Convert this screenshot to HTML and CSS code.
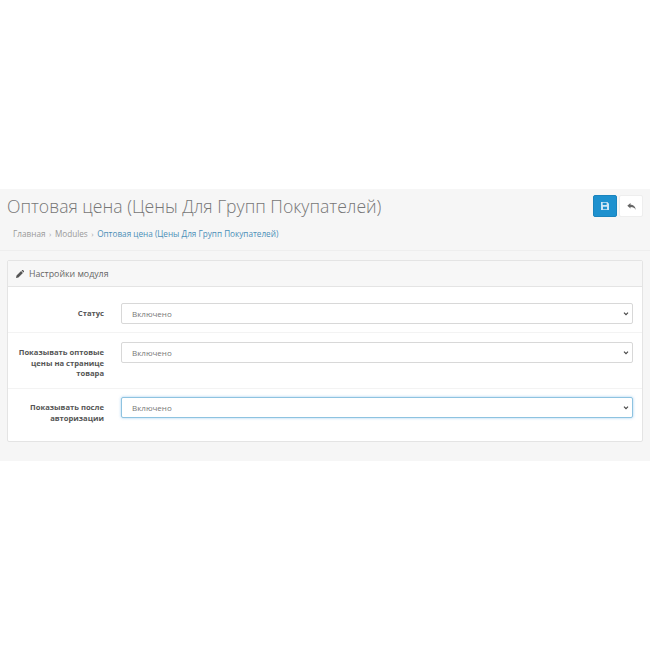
FILE: index.html
```html
<!DOCTYPE html>
<html lang="ru">
<head>
<meta charset="utf-8">
<title>Оптовая цена</title>
<link rel="stylesheet" href="styles.css">
</head>
<body>
<main class="band">
  <header class="page-header">
    <div class="title-row">
      <h1 class="title">Оптовая цена (Цены Для Групп Покупателей)</h1>
      <div class="actions">
        <button class="btn btn-primary" type="button" aria-label="Сохранить">
          <svg class="icon" viewBox="0 0 12 12" width="8" height="8"><path fill="#cfe6f5" fill-rule="evenodd" d="M0 0h9.5L12 2.5V12H0zM2.5 1v3.5h6V1zM3 7v4h6V7z"/></svg>
        </button>
        <button class="btn btn-default" type="button" aria-label="Отмена">
          <svg class="icon" viewBox="0 0 12 10" width="9" height="7"><path fill="#666" d="M0 4 4.6 0v2.4C8.6 2.4 11.6 4.4 12 10 10.6 7 8.6 5.8 4.6 5.8V8z"/></svg>
        </button>
      </div>
    </div>
    <nav class="crumbs">
      <span>Главная</span><span class="sep">›</span><span>Modules</span><span class="sep">›</span><span class="crumb-active">Оптовая цена (Цены Для Групп Покупателей)</span>
    </nav>
  </header>
  <section class="panel">
    <div class="panel-heading">
      <svg class="pencil" viewBox="0 0 12 12" width="8" height="8"><path fill="#555" d="M0 12l.8-3.6L7.6 1.6l2.8 2.8-6.8 6.8zM8.4.8 9.2 0a1 1 0 0 1 1.2 0L12 1.6a1 1 0 0 1 0 1.2l-.8.8z"/></svg>
      <span>Настройки модуля</span>
    </div>
    <form class="panel-body">
      <div class="row row-first">
        <label class="label">Статус</label>
        <div class="select">Включено<svg class="chev" viewBox="0 0 8 6" width="6" height="4"><path fill="none" stroke="#444" stroke-width="1.7" d="M1 1l3 3 3-3"/></svg></div>
      </div>
      <div class="row row-second">
        <label class="label">Показывать оптовые цены на странице товара</label>
        <div class="select">Включено<svg class="chev" viewBox="0 0 8 6" width="6" height="4"><path fill="none" stroke="#444" stroke-width="1.7" d="M1 1l3 3 3-3"/></svg></div>
      </div>
      <div class="row row-third">
        <label class="label">Показывать после авторизации</label>
        <div class="select select-focus">Включено<svg class="chev" viewBox="0 0 8 6" width="6" height="4"><path fill="none" stroke="#444" stroke-width="1.7" d="M1 1l3 3 3-3"/></svg></div>
      </div>
    </form>
  </section>
</main>
</body>
</html>
```
FILE: styles.css
```css
* { box-sizing: border-box; }
html, body { margin: 0; padding: 0; background: #fff; }
body {
  height: 650px;
  padding-top: 189px;
  font-family: "Open Sans", "Liberation Sans", sans-serif;
  color: #666;
}
.band {
  height: 272px;
  background: #f6f6f6;
  padding-bottom: 20px;
}
.page-header {
  height: 62px;
  padding: 6px 7px 0;
  border-bottom: 1px solid #eeeeee;
  margin-bottom: 9px;
}
.title-row { display: flex; justify-content: space-between; align-items: flex-start; }
.title {
  margin: 0;
  font-size: 17.6px;
  line-height: 22px;
  font-weight: 300;
  color: #777;
}
.actions { display: flex; gap: 2px; }
.btn {
  width: 24px;
  height: 22px;
  padding: 0;
  border: 1px solid transparent;
  border-radius: 2px;
  display: flex;
  align-items: center;
  justify-content: center;
}
.btn-primary { background: #1e91cf; border-color: #1b84bd; }
.btn-default { background: #fff; border-color: #eeeeee; }
.crumbs {
  display: flex;
  align-items: center;
  margin-top: 11px;
  padding-left: 6px;
  font-size: 8.2px;
  line-height: 12px;
  color: #999;
}
.sep { margin: 0 3.5px; font-size: 8px; color: #aaa; }
.crumb-active { color: #4b8fb8; }
.panel {
  height: 182px;
  margin: 0 7px;
  background: #fff;
  border: 1px solid #e4e4e4;
  border-radius: 2px;
}
.panel-heading {
  height: 26px;
  display: flex;
  align-items: center;
  gap: 5px;
  padding-left: 8px;
  background: #f7f7f7;
  border-bottom: 1px solid #e4e4e4;
  font-size: 8.8px;
  color: #666;
}
.panel-body { display: flex; flex-direction: column; }
.row {
  display: grid;
  grid-template-columns: 96px 1fr;
  column-gap: 17px;
  padding: 0 9px 0 0;
  border-bottom: 1px solid #f3f3f3;
}
.row-first { height: 46px; padding-top: 16px; }
.row-second { height: 56px; padding-top: 9px; }
.row-third { height: 54px; padding-top: 8px; border-bottom: 0; }
.label {
  padding-top: 5px;
  text-align: right;
  font-size: 7.65px;
  line-height: 10.6px;
  font-weight: 700;
  color: #555;
}
.select {
  height: 21px;
  display: flex;
  align-items: center;
  justify-content: space-between;
  padding: 0 3px 0 10px;
  background: #fff;
  border: 1px solid #d8d8d8;
  border-radius: 2px;
  font-size: 8px;
  color: #777;
}
.select-focus {
  border-color: #8ec3e0;
  box-shadow: 0 0 3px rgba(102, 175, 233, .6);
}
.icon, .pencil, .chev { display: block; flex: none; }
```
